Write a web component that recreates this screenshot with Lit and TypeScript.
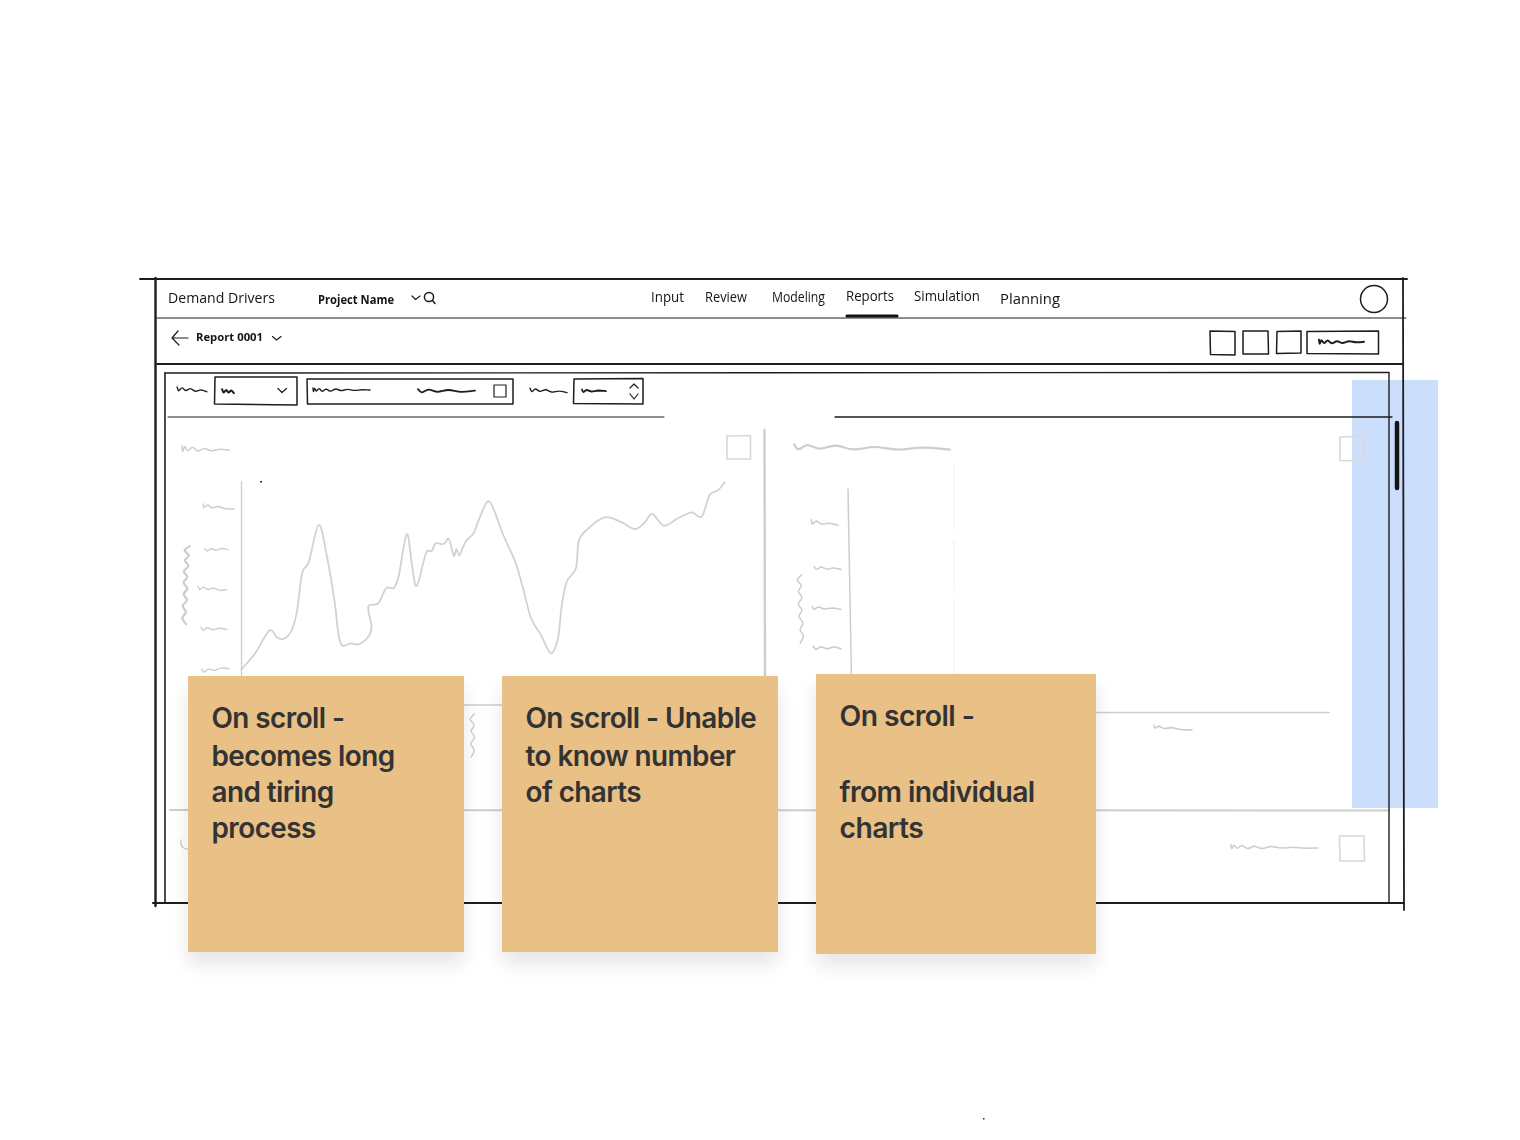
import { LitElement, html, svg, css } from "lit";
import { customElement } from "lit/decorators.js";

type P = [number, number];

function smooth(p: P[]): string {
  let d = `M${p[0][0].toFixed(1)} ${p[0][1].toFixed(1)}`;
  for (let i = 0; i < p.length - 1; i++) {
    const a = p[Math.max(0, i - 1)], b = p[i], c = p[i + 1], e = p[Math.min(p.length - 1, i + 2)];
    const c1 = [b[0] + (c[0] - a[0]) / 6, b[1] + (c[1] - a[1]) / 6];
    const c2 = [c[0] - (e[0] - b[0]) / 6, c[1] - (e[1] - b[1]) / 6];
    d += `C${c1[0].toFixed(1)} ${c1[1].toFixed(1)} ${c2[0].toFixed(1)} ${c2[1].toFixed(1)} ${c[0].toFixed(1)} ${c[1].toFixed(1)}`;
  }
  return d;
}

/* A scribble: a hook and quick wiggles at its start, stretching out into a flatter pencil line. */
function wave(x1: number, y1: number, x2: number, y2: number, amp = 1.8, period = 9, settle = 0.45): string {
  const len = Math.hypot(x2 - x1, y2 - y1);
  const n = Math.max(3, Math.round(len / (period / 2)));
  const ux = (x2 - x1) / len, uy = (y2 - y1) / len;
  const pts: P[] = [];
  const stretch = 1 + settle * 0.9;
  for (let i = 0; i <= n; i++) {
    const t = i / n;
    const along = Math.pow(t, stretch);
    const k = (i % 2 ? 1 : -1) * amp * (1 - settle * along) * (i === 0 ? 1.8 : 1) * (i % 3 === 0 ? 0.7 : 1);
    pts.push([x1 + ux * len * along - uy * k, y1 + uy * len * along + ux * k]);
  }
  return smooth(pts);
}

const chartRaw: P[] = [[205,733],[240,685],[275,617],[295,637],[310,642],[330,620],[345,560],[358,445],[375,410],[400,300],[420,390],[440,530],[450,630],[460,662],[480,655],[500,658],[525,635],[533,605],[525,545],[550,535],[570,490],[590,488],[602,450],[622,328],[635,420],[647,483],[670,385],[685,378],[695,355],[715,357],[728,342],[740,392],[747,373],[755,390],[770,350],[790,325],[805,280],[825,230],[840,250],[865,330],[895,410],[915,490],[935,580],[960,630],[985,685],[1003,640],[1012,545],[1025,470],[1048,430],[1055,350],[1075,315],[1120,277],[1160,290],[1195,312],[1220,295],[1240,267],[1270,302],[1305,280],[1340,262],[1365,275],[1385,210],[1405,197],[1423,172]];
const chartPts: P[] = chartRaw.map(([x, y]) => [160 + x / 2.52, 425 + y / 3] as P);

const topLabels: { t: string; x: number; w: number; y: number; fs: number; cls: string }[] = [
  { t: "Demand Drivers", x: 168, w: 107, y: 303, fs: 15, cls: "ink" },
  { t: "Project Name", x: 318, w: 76, y: 304, fs: 12, cls: "ink bold" },
  { t: "Input", x: 651, w: 33, y: 302, fs: 14, cls: "ink" },
  { t: "Review", x: 705, w: 42, y: 302, fs: 15, cls: "ink" },
  { t: "Modeling", x: 772, w: 53, y: 302, fs: 15, cls: "ink" },
  { t: "Reports", x: 846, w: 48, y: 301, fs: 15, cls: "ink" },
  { t: "Simulation", x: 914, w: 66, y: 301, fs: 14, cls: "ink" },
  { t: "Planning", x: 1000, w: 60, y: 304, fs: 15, cls: "ink" },
  { t: "Report 0001", x: 196, w: 67, y: 341, fs: 11, cls: "ink bold" },
];

const darkLines: [number, number, number, number, number][] = [
  [140, 279, 1407, 279, 2],
  [155.5, 278, 155.5, 906, 2.4],
  [153, 903, 1404, 903, 2.2],
  [1403, 278, 1404, 910, 1.8],
  [157, 318, 1406, 318, 1],
  [157, 364, 1403, 364, 1.8],
  [165, 373, 1389, 372.5, 1.4],
  [165, 373, 165, 903, 1.6],
  [1389, 373, 1389, 903, 1.4],
  [168, 417, 664, 417, 1],
  [835, 417, 1392, 417, 1.3],
];

const grayLines: [number, number, number, number, number][] = [
  [241.5, 482, 241.5, 680, 1.3],
  [764.5, 430, 765, 680, 2.4],
  [848, 489, 851.5, 680, 1.5],
  [460, 705, 505, 705, 1.6],
  [1090, 712.5, 1329, 712.5, 1.6],
  [170, 810, 1389, 810.5, 2],
];

const darkBoxes: string[] = [
  "1210,331 1235,331.5 1235,355 1210.5,354.5",
  "1243,331 1268,331 1268.5,354 1243,354",
  "1277,331.5 1301,331 1301,353 1276.5,353.5",
  "1307,331.5 1378.5,331 1378.5,354 1307,353.5",
  "215,377 297,377 297,405 214.5,404",
  "307,379 513,379 513,404 307.5,404",
  "574,379 643,378.5 643,404 573.5,403.5",
];

const grayBoxes: string[] = [
  "727,436 750.5,435.5 750.5,459 727,459",
  "1340,437 1365,436 1364.5,461 1340,460.5",
  "1339.5,836 1364,836 1364.5,861 1340,861",
];

const darkScribbles: { d: string; w: number }[] = [
  { d: wave(1319, 342, 1364, 342, 1.8, 9, 0.9), w: 2 },
  { d: wave(177, 389, 207, 391, 1.6, 9, 0.5), w: 1.4 },
  { d: wave(222, 391, 234, 392, 1.4, 5, 0.2), w: 2 },
  { d: wave(313, 390, 370, 390, 1.6, 9, 1), w: 1.4 },
  { d: wave(418, 391, 475, 391, 1.5, 18, 0.6), w: 1.8 },
  { d: wave(530, 390, 567, 392, 1.4, 10, 0.6), w: 1.4 },
  { d: wave(582, 391, 606, 391, 1.2, 10, 0.9), w: 1.8 },
];

const grayScribbles: { d: string; w: number }[] = [
  { d: wave(182, 449, 229, 450, 2.6, 11, 0.95), w: 1.5 },
  { d: wave(203, 506, 234, 509, 1.6, 10, 0.9), w: 1.5 },
  { d: wave(205, 550, 228, 549, 1.2, 9, 0.5), w: 1.4 },
  { d: wave(198, 588, 227, 590, 1.4, 10, 0.6), w: 1.4 },
  { d: wave(201, 629, 227, 629, 1.4, 10, 0.6), w: 1.4 },
  { d: wave(202, 671, 229, 668, 1.4, 10, 0.6), w: 1.4 },
  { d: wave(187, 546, 184, 624, 2.2, 11, 0.1), w: 2.2 },
  { d: wave(794, 447, 950, 449, 2.2, 34, 0.7), w: 2.2 },
  { d: wave(811, 522, 838, 525, 1.8, 11, 0.9), w: 1.6 },
  { d: wave(814, 568, 841, 569, 1.3, 10, 0.5), w: 1.5 },
  { d: wave(812, 608, 841, 609, 1.3, 11, 0.7), w: 1.5 },
  { d: wave(813, 648, 841, 648, 1.4, 11, 0.4), w: 1.7 },
  { d: wave(799, 575, 802, 643, 2, 12, 0.1), w: 1.5 },
  { d: wave(472, 714, 473, 757, 2, 12, 0.1), w: 1.4 },
  { d: wave(1154, 727, 1192, 730, 1.4, 12, 1), w: 1.6 },
  { d: wave(1231, 847, 1318, 848, 1.8, 15, 1), w: 1.5 },
  { d: "M181 840C180 846 184 850 189 849", w: 1.4 },
];

const stickies: { x: number; y: number; s: number; lines: string[] }[] = [
  { x: 188, y: 676, s: 276, lines: ["On scroll -", "becomes long", "and tiring", "process"] },
  { x: 502, y: 676, s: 276, lines: ["On scroll - Unable", "to know number", "of charts"] },
  { x: 816, y: 674, s: 280, lines: ["On scroll -", "", "from individual", "charts"] },
];

@customElement("app-root")
export class AppRoot extends LitElement {
  static styles = css`
    :host {
      display: block;
      width: 1520px;
      height: 1140px;
      position: relative;
      background: #fff;
      overflow: hidden;
    }
    .highlight {
      position: absolute;
      left: 1352px;
      top: 380px;
      width: 86px;
      height: 428px;
      background: #cbdffd;
    }
    .sketch {
      position: absolute;
      inset: 0;
      width: 1520px;
      height: 1140px;
      filter: blur(0.3px);
    }
    .ink {
      font-family: "Open Sans", sans-serif;
      font-weight: 500;
      fill: #141414;
    }
    .bold {
      font-weight: 700;
    }
    .dark {
      fill: none;
      stroke: #1d1d1d;
      stroke-linecap: round;
      stroke-linejoin: round;
    }
    .box {
      stroke-width: 1.5;
    }
    .icon {
      stroke-width: 1.2;
    }
    .gray {
      fill: none;
      stroke: #cdcdcd;
      stroke-linecap: round;
      stroke-linejoin: round;
    }
    .gray-box {
      stroke: #d8d8d8;
      stroke-width: 1.6;
    }
    .curve {
      stroke: #d2d2d2;
      stroke-width: 1.8;
    }
    .faint {
      stroke: #f1f1f1;
      stroke-width: 1;
    }
    .tab-mark {
      stroke: #111;
      stroke-width: 3;
    }
    .thumb {
      stroke: #141414;
      stroke-width: 4.5;
    }
    .speck {
      fill: #333;
    }
    .sticky {
      position: absolute;
      box-sizing: border-box;
      padding: 24px 24px 24px 23.5px;
      background: #e9c086;
      box-shadow: 0 12px 18px rgba(0, 0, 0, 0.1);
      font-family: Inter, sans-serif;
      font-weight: 600;
      letter-spacing: -0.02em;
      color: #333333;
    }
    .line {
      height: 36px;
      line-height: 36px;
      white-space: nowrap;
    }
    .line:first-child,
    .line.blank {
      height: 38px;
    }
  `;

  private renderSketch() {
    return html`<svg class="sketch" viewBox="0 0 1520 1140" xmlns="http://www.w3.org/2000/svg">
      ${grayLines.map(([a, b, c, d, w]) => svg`<line class="gray" x1=${a} y1=${b} x2=${c} y2=${d} stroke-width=${w}></line>`)}
      <path class="faint" d="M954 463V530M954 540V590M954 598V676"></path>
      <path class="gray curve" d=${smooth(chartPts)}></path>
      ${grayScribbles.map((s) => svg`<path class="gray" d=${s.d} stroke-width=${s.w}></path>`)}
      ${grayBoxes.map((p) => svg`<polygon class="gray gray-box" points=${p}></polygon>`)}
      ${darkLines.map(([a, b, c, d, w]) => svg`<line class="dark" x1=${a} y1=${b} x2=${c} y2=${d} stroke-width=${w}></line>`)}
      ${darkBoxes.map((p) => svg`<polygon class="dark box" points=${p}></polygon>`)}
      ${darkScribbles.map((s) => svg`<path class="dark" d=${s.d} stroke-width=${s.w}></path>`)}
      ${topLabels.map(
        (l) => svg`<text class=${l.cls} x=${l.x} y=${l.y} font-size=${l.fs} textLength=${l.w} lengthAdjust="spacingAndGlyphs">${l.t}</text>`
      )}
      <line class="dark tab-mark" x1="847" y1="316" x2="897" y2="316"></line>
      <circle class="dark box" cx="1374" cy="299" r="13.5"></circle>
      <path class="dark icon" d="M412 296L415.500 299.500L420 296"></path>
      <circle class="dark box" cx="429" cy="297" r="4.6"></circle>
      <path class="dark box" d="M432.500 300.500L435 303.500"></path>
      <path class="dark icon" d="M178 331L172 338L179 345M172 338H188"></path>
      <path class="dark icon" d="M272.500 336.500L276.500 340L281 336.500"></path>
      <path class="dark icon" d="M278 388.500L282 392.500L286.500 388.500"></path>
      <rect class="dark icon" x="494" y="385" width="12" height="12"></rect>
      <path class="dark icon" d="M630 388L634 384L638 388M630 394L634 399L638 394"></path>
      <line class="dark thumb" x1="1397" y1="423" x2="1397" y2="488"></line>
      <rect class="speck" x="260" y="481" width="2" height="1.500"></rect>
      <rect class="speck" x="983" y="1118" width="1.500" height="1.500"></rect>
    </svg>`;
  }

  render() {
    return html`
      <div class="highlight"></div>
      ${this.renderSketch()}
      ${stickies.map(
        (s) => html`<div class="sticky" style="left:${s.x}px;top:${s.y}px;width:${s.s}px;height:${s.s}px;font-size:${(s.s * 0.101).toFixed(2)}px">
          ${s.lines.map((l) => html`<div class="line ${l ? "" : "blank"}">${l}</div>`)}
        </div>`
      )}
    `;
  }
}
